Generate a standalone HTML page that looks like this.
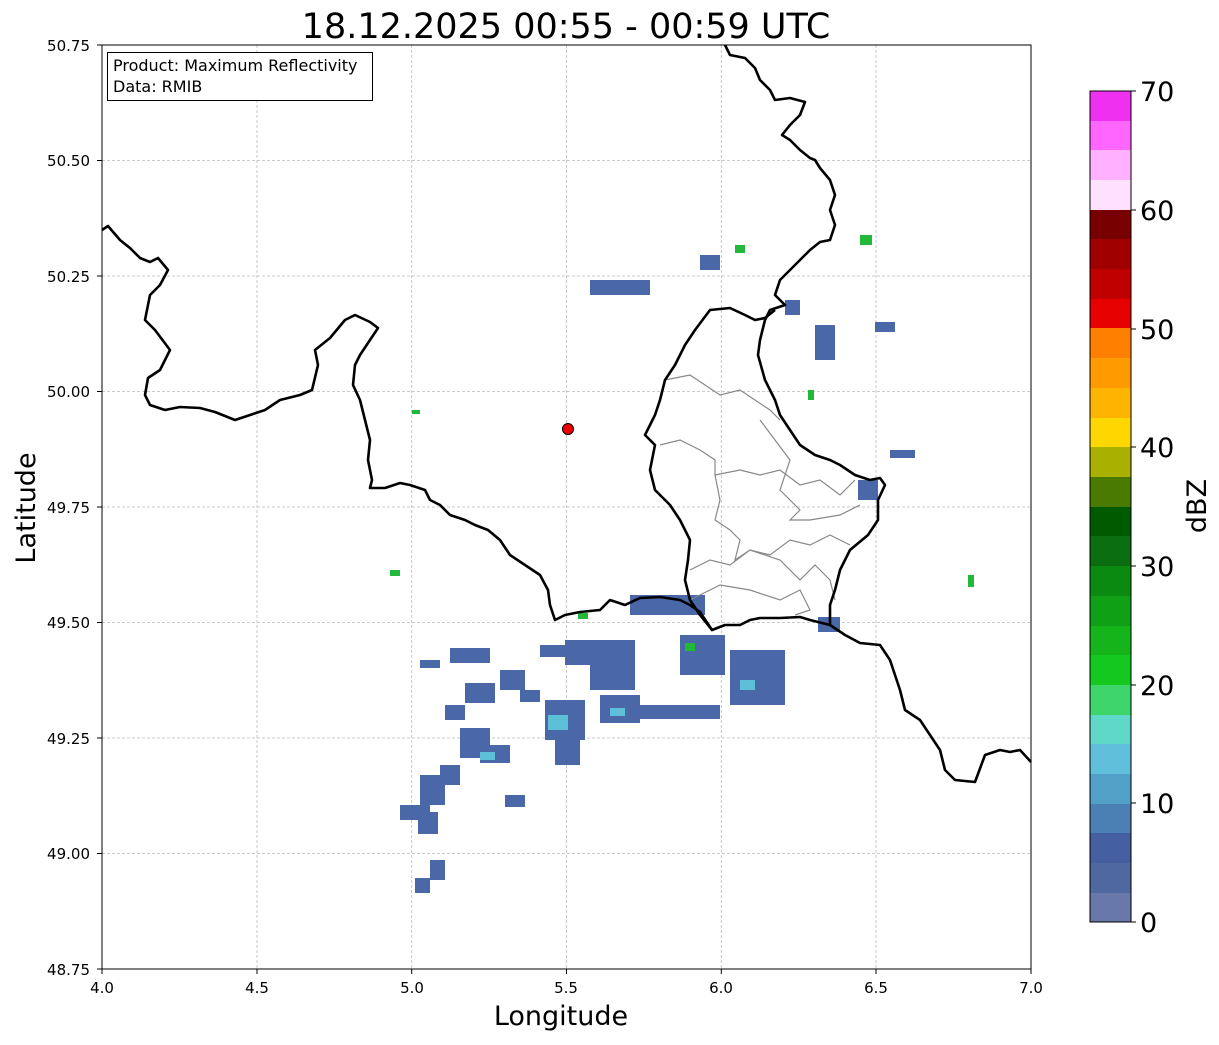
<!DOCTYPE html>
<html><head><meta charset="utf-8"><style>
body{margin:0;background:#fff;width:1219px;height:1040px;overflow:hidden;font-family:"Liberation Sans","DejaVu Sans",sans-serif}
</style></head><body>
<svg width="1219" height="1040" xmlns="http://www.w3.org/2000/svg" font-family="DejaVu Sans, Liberation Sans, sans-serif">
<rect width="1219" height="1040" fill="#fff"/>
<text x="566" y="38" font-size="35" text-anchor="middle">18.12.2025 00:55 - 00:59 UTC</text>
<g stroke="#bbb" stroke-width="0.8" stroke-dasharray="3,2">
<line x1="257" y1="45" x2="257" y2="969"/><line x1="411.7" y1="45" x2="411.7" y2="969"/><line x1="566.5" y1="45" x2="566.5" y2="969"/><line x1="721.3" y1="45" x2="721.3" y2="969"/><line x1="876" y1="45" x2="876" y2="969"/>
<line x1="102" y1="160.5" x2="1031" y2="160.5"/><line x1="102" y1="276" x2="1031" y2="276"/><line x1="102" y1="391.5" x2="1031" y2="391.5"/><line x1="102" y1="507" x2="1031" y2="507"/><line x1="102" y1="622.5" x2="1031" y2="622.5"/><line x1="102" y1="738" x2="1031" y2="738"/><line x1="102" y1="853.5" x2="1031" y2="853.5"/>
</g>
<g fill="#4a68a8">
<rect x="565" y="640" width="70" height="25"/><rect x="590" y="655" width="45" height="35"/><rect x="540" y="645" width="30" height="12"/>
<rect x="600" y="695" width="40" height="28"/><rect x="640" y="705" width="80" height="14"/><rect x="545" y="700" width="40" height="40"/><rect x="555" y="740" width="25" height="25"/>
<rect x="680" y="635" width="45" height="40"/><rect x="730" y="650" width="55" height="55"/><rect x="630" y="595" width="75" height="20"/>
<rect x="460" y="728" width="30" height="30"/><rect x="480" y="745" width="30" height="18"/><rect x="420" y="775" width="25" height="30"/><rect x="440" y="765" width="20" height="20"/>
<rect x="400" y="805" width="30" height="15"/><rect x="418" y="812" width="20" height="22"/><rect x="505" y="795" width="20" height="12"/><rect x="430" y="860" width="15" height="20"/><rect x="415" y="878" width="15" height="15"/>
<rect x="465" y="683" width="30" height="20"/><rect x="500" y="670" width="25" height="20"/><rect x="520" y="690" width="20" height="12"/><rect x="420" y="660" width="20" height="8"/><rect x="450" y="648" width="40" height="15"/><rect x="445" y="705" width="20" height="15"/>
<rect x="815" y="325" width="20" height="35"/><rect x="875" y="322" width="20" height="10"/><rect x="858" y="480" width="20" height="20"/><rect x="818" y="617" width="22" height="15"/>
<rect x="590" y="280" width="60" height="15"/><rect x="700" y="255" width="20" height="15"/><rect x="785" y="300" width="15" height="15"/><rect x="890" y="450" width="25" height="8"/>
</g>
<g fill="#5ec0d8"><rect x="548" y="715" width="20" height="15"/><rect x="740" y="680" width="15" height="10"/><rect x="480" y="752" width="15" height="8"/><rect x="610" y="708" width="15" height="8"/></g>
<g fill="#22b83a"><rect x="685" y="643" width="10" height="8"/><rect x="578" y="613" width="10" height="6"/><rect x="735" y="245" width="10" height="8"/><rect x="860" y="235" width="12" height="10"/><rect x="808" y="390" width="6" height="10"/><rect x="968" y="575" width="6" height="12"/><rect x="412" y="410" width="8" height="4"/><rect x="390" y="570" width="10" height="6"/></g>
<g fill="none" stroke="#888" stroke-width="1.2">
<polyline points="665,380 690,375 705,385 720,395 740,390 755,400 770,410 780,420"/>
<polyline points="660,445 680,440 700,450 715,460 715,475 740,470 760,475 780,470 800,485 820,480 840,495 855,480"/>
<polyline points="715,475 720,500 715,520 730,530 740,540 735,560 750,550 770,555 790,540 810,545 830,535 850,545"/>
<polyline points="690,570 710,560 730,565 750,550 780,560 800,580 815,565 830,580 835,600"/>
<polyline points="690,600 720,585 750,590 780,600 800,590 810,610 795,615"/>
<polyline points="760,420 775,440 790,460 780,490 800,510 790,520 810,520 840,515 860,505"/>
</g>
<g fill="none" stroke="#000" stroke-width="2.6" stroke-linejoin="round">
<polyline points="102,230 108,226 120,240 130,248 140,258 150,262 158,258 168,270 160,285 150,295 145,320 155,330 170,350 160,370 148,378 145,395 150,405 165,410 180,407 200,408 215,412 235,420 250,415 265,410 280,400 300,395 312,390 318,365 315,350 330,338 345,320 355,315 370,322 378,328 370,340 360,355 355,365 353,385 360,400 365,420 370,440 368,460 372,480 370,488 385,488 400,483 410,485 425,490 430,500 440,505 450,515 465,520 475,525 488,530 500,540 510,555 525,565 540,575 548,590 550,605 555,620 565,615 580,612 600,610 610,600 625,605 640,598 660,597 680,600 690,605 700,612 712,630 725,625 740,625 750,620 760,618 780,618 800,617 810,620 830,625 845,635 860,643 880,645 890,660 895,675 900,690 905,710 920,720 930,735 940,750 945,770 955,780 975,782 985,755 1000,750 1010,752 1020,750 1031,762"/>
<polyline points="725,45 730,55 745,58 755,68 760,80 770,90 775,100 790,98 805,102 800,115 790,125 782,135 790,140 800,150 810,158 815,160 820,168 830,180 835,195 830,210 835,225 830,240 820,242 810,250 800,260 790,270 780,280 775,295 785,305 770,310 765,320 760,340 758,355 765,380 775,400 780,415 790,430 800,445 815,455 830,460 840,465 855,475 870,480 880,478 885,485 878,500 878,520 868,535 850,550 840,570 835,590 830,605 830,625"/>
<polyline points="712,630 700,615 690,600 685,580 688,560 690,540 680,520 670,505 655,490 650,470 655,445 645,435 655,415 660,400 665,380 675,365 685,345 695,330 710,310 730,308 745,315 755,320 765,318 775,310"/>
</g>
<circle cx="568" cy="429" r="5.5" fill="#e00" stroke="#000" stroke-width="1"/>
<rect x="102" y="45" width="929" height="924" fill="none" stroke="#000" stroke-width="1"/>
<g stroke="#000" stroke-width="1">
<line x1="102" y1="969" x2="102" y2="974"/><line x1="257" y1="969" x2="257" y2="974"/><line x1="411.7" y1="969" x2="411.7" y2="974"/><line x1="566.5" y1="969" x2="566.5" y2="974"/><line x1="721.3" y1="969" x2="721.3" y2="974"/><line x1="876" y1="969" x2="876" y2="974"/><line x1="1031" y1="969" x2="1031" y2="974"/>
<line x1="97" y1="45" x2="102" y2="45"/><line x1="97" y1="160.5" x2="102" y2="160.5"/><line x1="97" y1="276" x2="102" y2="276"/><line x1="97" y1="391.5" x2="102" y2="391.5"/><line x1="97" y1="507" x2="102" y2="507"/><line x1="97" y1="622.5" x2="102" y2="622.5"/><line x1="97" y1="738" x2="102" y2="738"/><line x1="97" y1="853.5" x2="102" y2="853.5"/><line x1="97" y1="969" x2="102" y2="969"/>
</g>
<rect x="107.5" y="52.5" width="265" height="48" fill="#fff" stroke="#000" stroke-width="1"/>
<text x="113" y="71" font-size="16">Product: Maximum Reflectivity</text>
<text x="113" y="92" font-size="16">Data: RMIB</text>
<g font-size="15" text-anchor="middle">
<text x="102" y="993">4.0</text><text x="257" y="993">4.5</text><text x="412" y="993">5.0</text><text x="566" y="993">5.5</text><text x="721" y="993">6.0</text><text x="876" y="993">6.5</text><text x="1031" y="993">7.0</text>
</g>
<g font-size="15" text-anchor="end">
<text x="90" y="51">50.75</text><text x="90" y="166">50.50</text><text x="90" y="282">50.25</text><text x="90" y="397">50.00</text><text x="90" y="513">49.75</text><text x="90" y="628">49.50</text><text x="90" y="744">49.25</text><text x="90" y="859">49.00</text><text x="90" y="975">48.75</text>
</g>
<text x="561" y="1025" font-size="27" text-anchor="middle">Longitude</text>
<text transform="translate(35,508) rotate(-90)" font-size="27" text-anchor="middle">Latitude</text>
<g>
<rect x="1090" y="91" width="41" height="30" fill="#f030f0"/><rect x="1090" y="121" width="41" height="30" fill="#ff66ff"/><rect x="1090" y="150" width="41" height="30" fill="#ffb0ff"/><rect x="1090" y="180" width="41" height="30" fill="#ffe0ff"/>
<rect x="1090" y="210" width="41" height="30" fill="#780000"/><rect x="1090" y="239" width="41" height="30" fill="#a00000"/><rect x="1090" y="269" width="41" height="30" fill="#c00000"/><rect x="1090" y="299" width="41" height="30" fill="#e60000"/>
<rect x="1090" y="328" width="41" height="30" fill="#ff8000"/><rect x="1090" y="358" width="41" height="30" fill="#ff9a00"/><rect x="1090" y="388" width="41" height="30" fill="#ffb400"/><rect x="1090" y="418" width="41" height="30" fill="#ffd700"/>
<rect x="1090" y="447" width="41" height="30" fill="#aab000"/><rect x="1090" y="477" width="41" height="30" fill="#4a7a00"/><rect x="1090" y="507" width="41" height="30" fill="#005a00"/><rect x="1090" y="536" width="41" height="30" fill="#0a6e10"/>
<rect x="1090" y="566" width="41" height="30" fill="#0a8a10"/><rect x="1090" y="596" width="41" height="30" fill="#0fa015"/><rect x="1090" y="626" width="41" height="30" fill="#14b41a"/><rect x="1090" y="655" width="41" height="30" fill="#14c820"/>
<rect x="1090" y="685" width="41" height="30" fill="#3ed66a"/><rect x="1090" y="715" width="41" height="30" fill="#60d8c8"/><rect x="1090" y="744" width="41" height="30" fill="#60c0dc"/><rect x="1090" y="774" width="41" height="30" fill="#50a0c8"/>
<rect x="1090" y="804" width="41" height="30" fill="#4a80b4"/><rect x="1090" y="833" width="41" height="30" fill="#4460a0"/><rect x="1090" y="863" width="41" height="30" fill="#5068a0"/><rect x="1090" y="893" width="41" height="29" fill="#6878a8"/>
<rect x="1090" y="91" width="41" height="831" fill="none" stroke="#000" stroke-width="1"/>
</g>
<g stroke="#000" stroke-width="1"><line x1="1131" y1="922" x2="1136" y2="922"/><line x1="1131" y1="803" x2="1136" y2="803"/><line x1="1131" y1="685" x2="1136" y2="685"/><line x1="1131" y1="566" x2="1136" y2="566"/><line x1="1131" y1="447" x2="1136" y2="447"/><line x1="1131" y1="329" x2="1136" y2="329"/><line x1="1131" y1="210" x2="1136" y2="210"/><line x1="1131" y1="91" x2="1136" y2="91"/></g>
<g font-size="27">
<text x="1140" y="932">0</text><text x="1140" y="813">10</text><text x="1140" y="695">20</text><text x="1140" y="576">30</text><text x="1140" y="457">40</text><text x="1140" y="339">50</text><text x="1140" y="220">60</text><text x="1140" y="101">70</text>
</g>
<text transform="translate(1206,506) rotate(-90)" font-size="27" text-anchor="middle">dBZ</text>
</svg>
</body></html>
